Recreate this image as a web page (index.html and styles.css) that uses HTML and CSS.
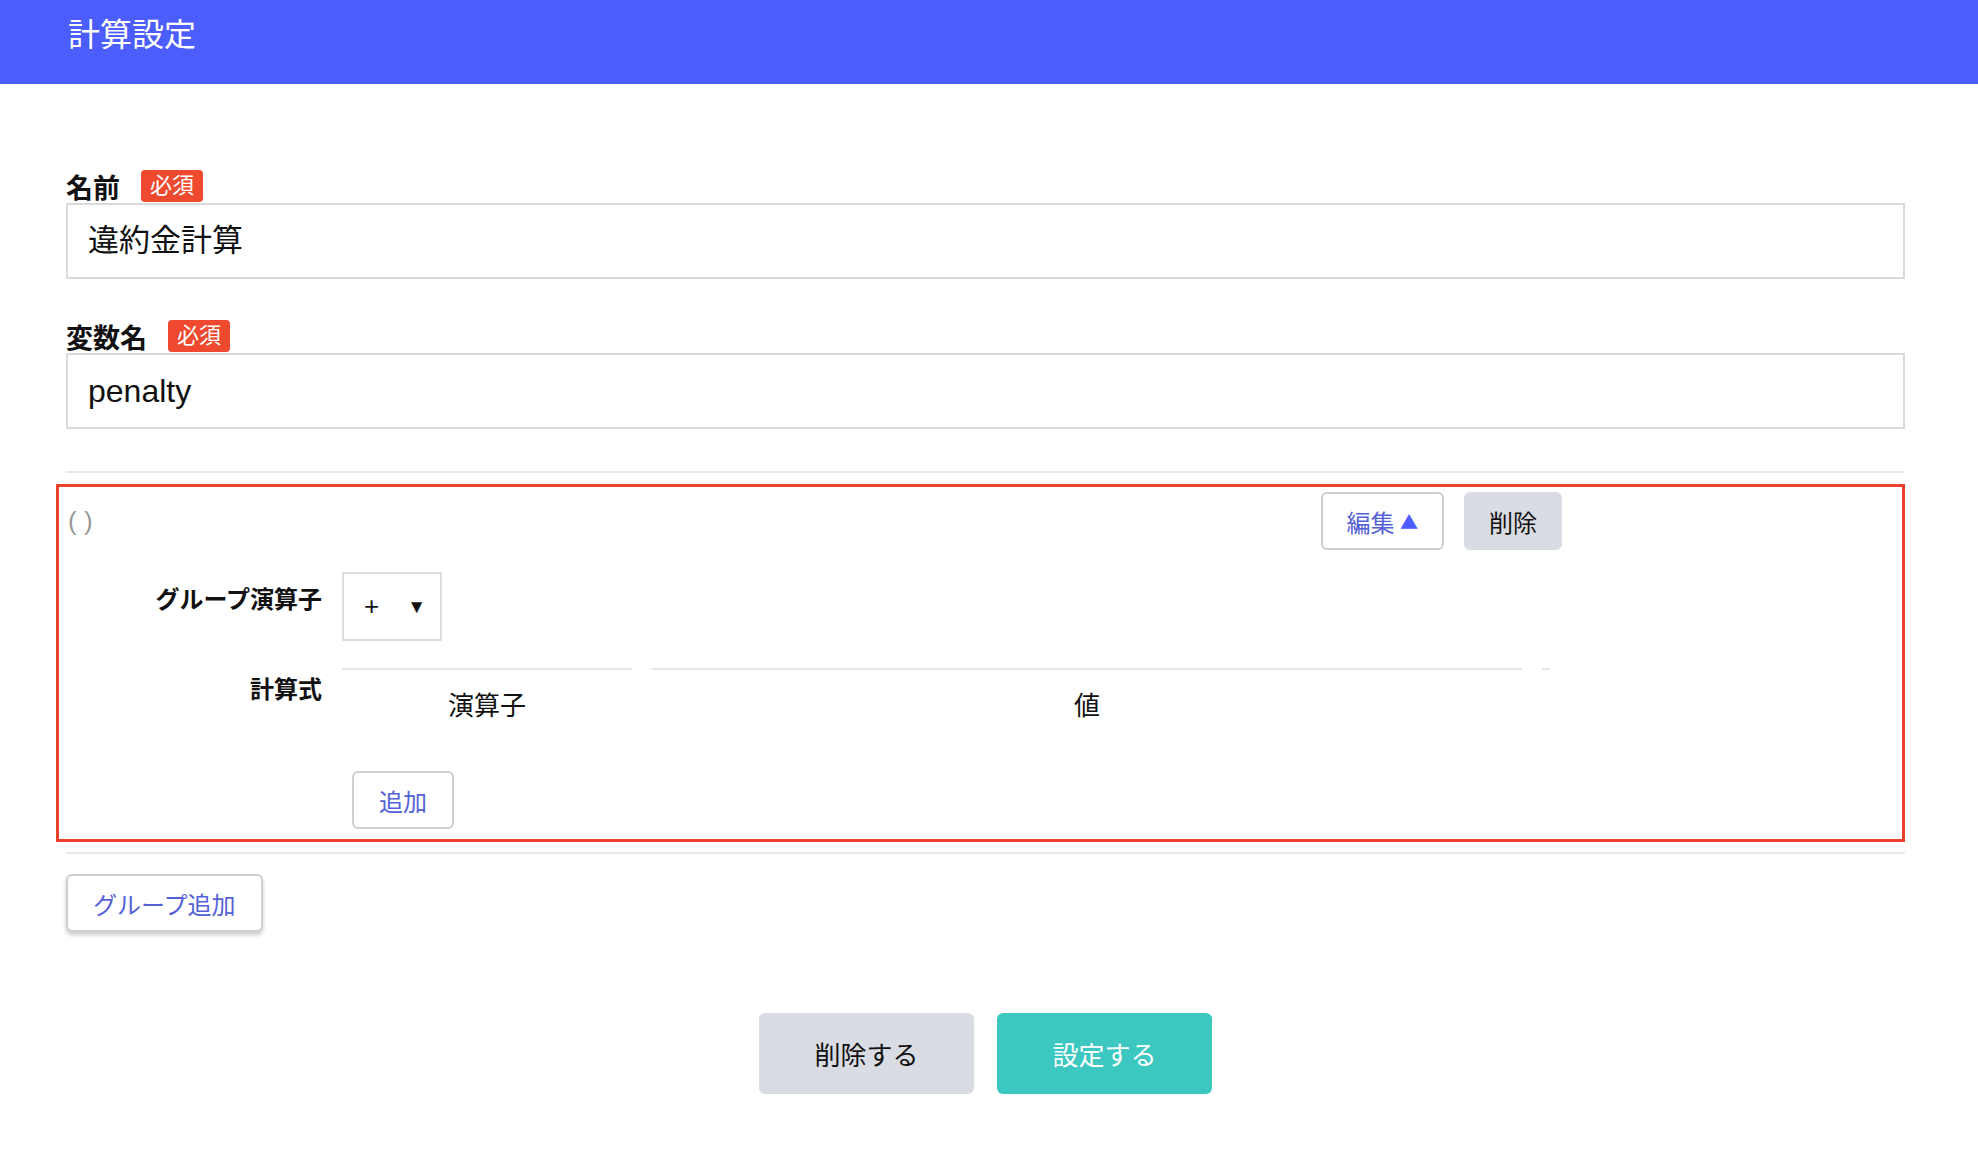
FILE: index.html
```html
<!DOCTYPE html>
<html lang="ja">

<head>
    <meta charset="UTF-8" />
    <meta name="viewport" content="width=device-width, initial-scale=1.0" />
    <title>計算設定</title>
    <link rel="stylesheet" href="styles.css">
</head>

<body>
    <header class="page-header">
        <h1>計算設定</h1>
    </header>

    <main class="page-body">
        <div class="field">
            <label class="field-label" for="name">名前<span class="required">必須</span></label>
            <input type="text" id="name" class="text-input" value="違約金計算" />
        </div>

        <div class="field">
            <label class="field-label" for="variable">変数名<span class="required">必須</span></label>
            <input type="text" id="variable" class="text-input latin" value="penalty" />
        </div>

        <hr class="divider" />

        <section class="group">
            <div class="group-head">
                <span class="group-expr">( )</span>
                <div class="group-actions">
                    <button class="btn btn-outline">編集 <span class="caret">▲</span></button>
                    <button class="btn btn-gray">削除</button>
                </div>
            </div>

            <div class="group-row">
                <div class="group-label">グループ演算子</div>
                <div class="select">
                    <span class="select-value">+</span>
                    <span class="select-arrow">▼</span>
                </div>
            </div>

            <div class="group-row formula-row">
                <div class="group-label">計算式</div>
                <div>
                    <table class="formula-table">
                        <thead>
                            <tr>
                                <th class="col-op">演算子</th>
                                <th class="col-value">値</th>
                                <th class="col-action"></th>
                            </tr>
                        </thead>
                        <tbody></tbody>
                    </table>
                    <button class="btn btn-outline btn-add">追加</button>
                </div>
            </div>
        </section>

        <hr class="divider divider-bottom" />

        <button class="btn btn-outline btn-shadow">グループ追加</button>

        <div class="form-actions">
            <button class="btn btn-large btn-gray">削除する</button>
            <button class="btn btn-large btn-teal">設定する</button>
        </div>
    </main>
</body>

</html>
```

FILE: styles.css
```css
body {
    margin: 0;
    font-family: "Liberation Sans", "Noto Sans CJK JP", sans-serif;
    color: #111;
    background-color: white;
}

.page-header {
    height: 84px;
    background-color: #4b5dfd;
    box-sizing: border-box;
    padding: 12px 0 0 68px;
}

.page-header h1 {
    margin: 0;
    color: white;
    font-size: 32px;
    font-weight: normal;
    line-height: 46px;
}

.page-body {
    padding: 86px 73px 60px 66px;
}

.field + .field {
    margin-top: 41px;
}

.field-label {
    display: flex;
    align-items: center;
    height: 32px;
    margin-bottom: 1px;
    font-size: 27px;
    font-weight: bold;
}

.required {
    display: inline-block;
    margin-left: 21px;
    padding: 0 9px;
    height: 32px;
    line-height: 32px;
    border-radius: 4px;
    background-color: #ef4a2f;
    color: white;
    font-size: 22px;
    font-weight: normal;
}

.text-input {
    display: block;
    width: 100%;
    height: 76px;
    box-sizing: border-box;
    padding: 0 20px 7px;
    border: 2px solid #dadada;
    font-family: "Noto Sans CJK JP", sans-serif;
    font-size: 31px;
    color: #111;
    outline: none;
}

.text-input.latin {
    padding-bottom: 0;
    font-family: "Liberation Sans", sans-serif;
    font-size: 32px;
}

.divider {
    margin: 42px 0 0;
    border: none;
    border-top: 2px solid #e8e8e8;
}

.divider-bottom {
    margin-top: 10px;
}

/* グループ */
.group {
    margin: 11px 0 0 -10px;
    padding: 5px 0 10px 9px;
    border: 3px solid #e9412b;
}

.group-head {
    display: flex;
    align-items: center;
    justify-content: space-between;
    width: 1494px;
}

.group-expr {
    color: #999;
    font-size: 26px;
}

.group-actions {
    display: flex;
    gap: 20px;
}

.group-actions .btn {
    padding: 0 24px;
}

.group-actions .btn-gray {
    padding: 0 23px;
}

.btn {
    height: 58px;
    padding: 0 25px;
    border: 2px solid #cfcfcf;
    border-radius: 6px;
    font-family: "Noto Sans CJK JP", sans-serif;
    font-size: 24px;
    cursor: pointer;
}

.btn-outline {
    background-color: white;
    color: #5461d6;
}

.caret {
    color: #4b5dfd;
    font-size: 18px;
    vertical-align: 3px;
}

.btn-gray {
    background-color: #d9dce3;
    border-color: #d9dce3;
    color: #111;
}

.group-row {
    display: grid;
    grid-template-columns: 254px 1fr;
    column-gap: 20px;
    margin-top: 22px;
}

.group-label {
    text-align: right;
    font-family: "Noto Sans CJK JP", sans-serif;
    font-size: 24px;
    font-weight: bold;
    line-height: 32px;
    padding-top: 10px;
}

.select {
    display: flex;
    align-items: center;
    justify-content: space-between;
    width: 100px;
    height: 69px;
    box-sizing: border-box;
    padding: 0 14px 0 20px;
    border: 2px solid #dcdcdc;
    font-size: 26px;
}

.select-arrow {
    font-size: 19px;
}

.formula-row {
    margin-top: 27px;
}

.formula-row .group-label {
    padding-top: 4px;
}

.formula-table {
    border-collapse: separate;
    border-spacing: 20px 0;
    margin-left: -20px;
}

.formula-table th {
    border-top: 2px solid #e6e6e6;
    padding: 16px 0;
    font-family: "Noto Sans CJK JP", sans-serif;
    font-size: 26px;
    font-weight: normal;
    line-height: 36px;
}

.col-op {
    width: 290px;
}

.col-value {
    width: 870px;
}

.col-action {
    width: 8px;
}

.btn-add {
    margin: 33px 0 0 10px;
}

.btn-shadow {
    margin-top: 20px;
    box-shadow: 0 3px 4px rgba(0, 0, 0, 0.2);
}

.form-actions {
    display: flex;
    justify-content: center;
    gap: 23px;
    margin-top: 81px;
}

.btn-large {
    width: 215px;
    height: 81px;
    font-size: 26px;
    border: none;
}

.btn-teal {
    background-color: #3cc8c0;
    color: white;
}
```
